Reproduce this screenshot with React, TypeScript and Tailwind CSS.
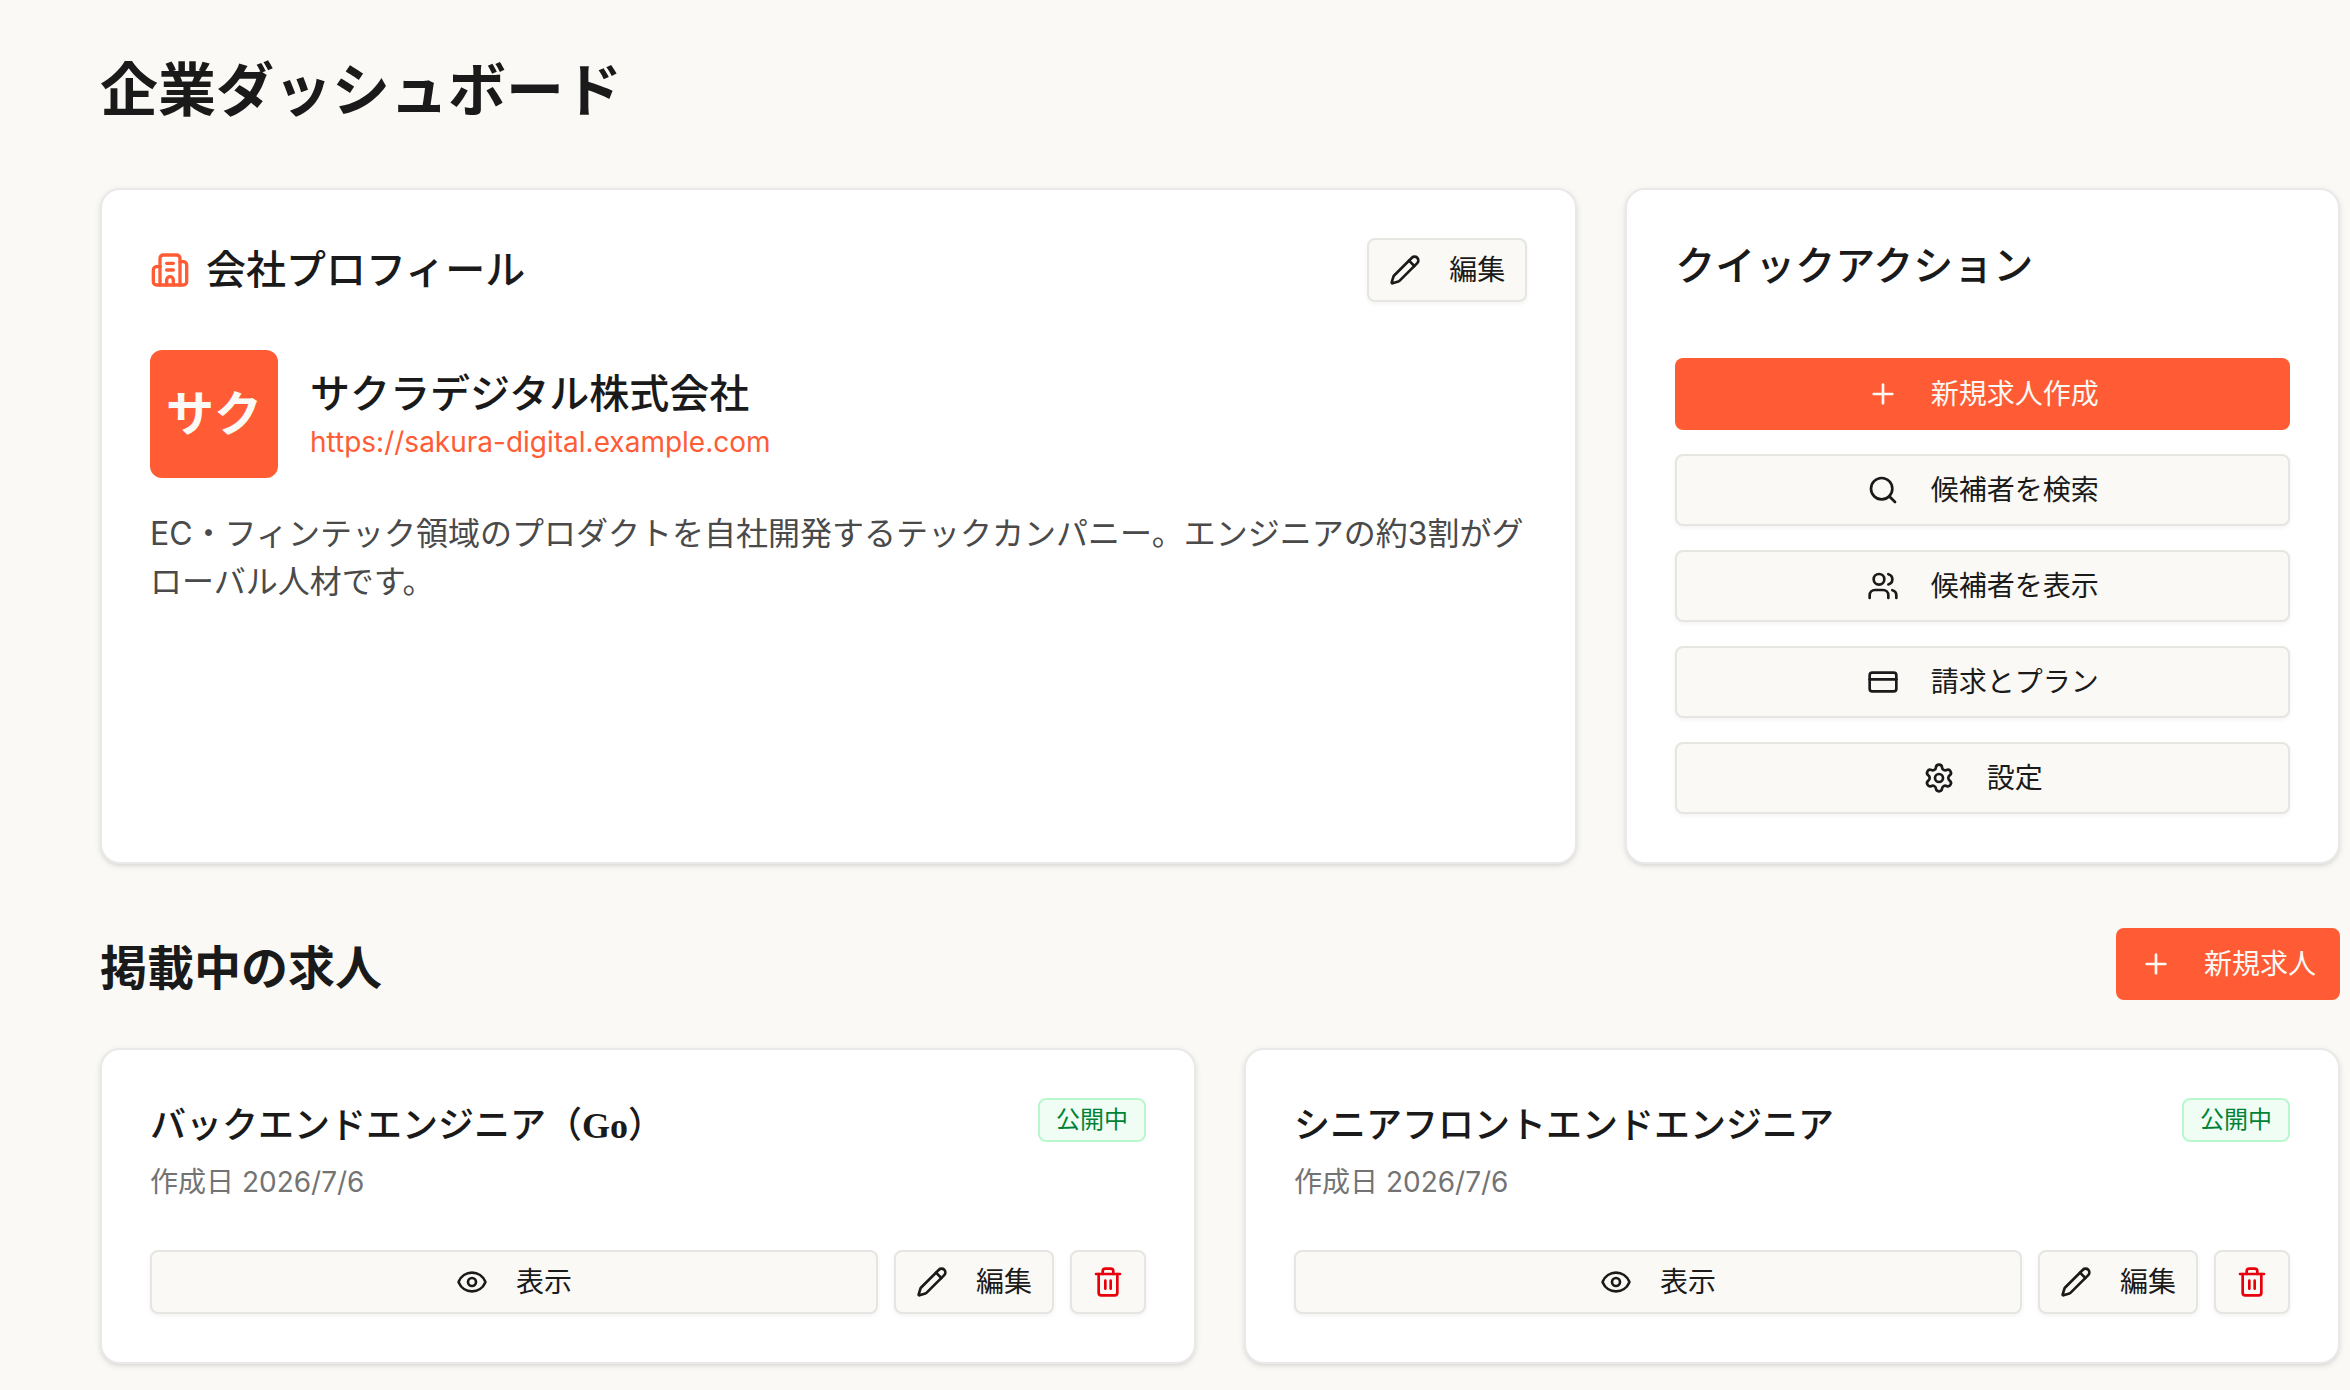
import type { ButtonHTMLAttributes, ReactNode } from 'react';
import {
  Building2,
  CreditCard,
  Eye,
  Pencil,
  Plus,
  Search,
  Settings,
  Trash2,
  Users,
  type LucideIcon,
} from 'lucide-react';
import clsx from 'clsx';

type Job = {
  id: string;
  title: ReactNode;
  createdAt: string;
};

type QuickAction = {
  label: string;
  icon: LucideIcon;
  primary?: boolean;
};

const company = {
  name: 'サクラデジタル株式会社',
  initials: 'サク',
  website: 'https://sakura-digital.example.com',
  description:
    'EC・フィンテック領域のプロダクトを自社開発するテックカンパニー。エンジニアの約3割がグローバル人材です。',
};

const quickActions: QuickAction[] = [
  { label: '新規求人作成', icon: Plus, primary: true },
  { label: '候補者を検索', icon: Search },
  { label: '候補者を表示', icon: Users },
  { label: '請求とプラン', icon: CreditCard },
  { label: '設定', icon: Settings },
];

const jobs: Job[] = [
  {
    id: 'backend',
    title: (
      <>
        バックエンドエンジニア（<span className="font-bold">Go</span>）
      </>
    ),
    createdAt: '2026/7/6',
  },
  { id: 'frontend', title: 'シニアフロントエンドエンジニア', createdAt: '2026/7/6' },
];

type ButtonProps = ButtonHTMLAttributes<HTMLButtonElement> & {
  variant?: 'primary' | 'outline';
  size?: 'sm' | 'md';
};

function Button({ variant = 'outline', size = 'md', className, children, ...props }: ButtonProps) {
  return (
    <button
      type="button"
      className={clsx(
        'inline-flex items-center justify-center rounded-lg text-[28px] leading-10 whitespace-nowrap',
        variant === 'primary' && 'bg-[#ff5c35] text-[#faf9f5] hover:bg-[#f04d26]',
        variant === 'outline' &&
          'border-2 border-[#e6e5e1] bg-[#faf9f5] text-[#1a1a1a] shadow-[0_2px_4px_rgba(0,0,0,0.05)] hover:bg-[#f3f2ed]',
        size === 'md' && 'h-18 gap-8 px-6',
        size === 'sm' && 'h-16 gap-7 px-5',
        className,
      )}
      {...props}
    >
      {children}
    </button>
  );
}

function Card({ className, children }: { className?: string; children: ReactNode }) {
  return (
    <div
      className={clsx(
        'rounded-[20px] border-2 border-[#e9e9e9] bg-white p-12 shadow-[0_2px_6px_rgba(0,0,0,0.1),0_2px_4px_-2px_rgba(0,0,0,0.1)]',
        className,
      )}
    >
      {children}
    </div>
  );
}

function CompanyProfile() {
  return (
    <Card className="col-span-2">
      <div className="flex items-center justify-between">
        <h2 className="flex items-center gap-4 text-[40px] leading-14 font-medium">
          <Building2 className="size-10 text-[#ff5c35]" />
          会社プロフィール
        </h2>
        <Button size="sm">
          <Pencil className="size-8" />
          編集
        </Button>
      </div>

      <div className="mt-12 flex items-center gap-8">
        <div className="flex size-32 items-center justify-center rounded-xl bg-[#ff5c35] text-5xl font-bold text-[#faf9f5]">
          {company.initials}
        </div>
        <div>
          <h3 className="text-[40px] leading-14 font-medium">{company.name}</h3>
          <a href={company.website} className="block text-[28px] leading-10 text-[#ff5c35] hover:underline">
            {company.website}
          </a>
        </div>
      </div>

      <p className="mt-8 text-[32px] leading-12 text-[#4a4a4a]">{company.description}</p>
    </Card>
  );
}

function QuickActions() {
  return (
    <Card>
      <h2 className="text-[40px] leading-14 font-medium">クイックアクション</h2>
      <div className="mt-16 flex flex-col gap-6">
        {quickActions.map(({ label, icon: Icon, primary }) => (
          <Button key={label} variant={primary ? 'primary' : 'outline'}>
            <Icon className="size-8" />
            {label}
          </Button>
        ))}
      </div>
    </Card>
  );
}

function JobCard({ job }: { job: Job }) {
  return (
    <Card>
      <div className="flex items-start justify-between">
        <div>
          <h3 className="font-['Liberation_Serif','Noto_Sans_CJK_JP',sans-serif] text-4xl leading-14 font-medium">
            {job.title}
          </h3>
          <p className="mt-2 text-[28px] leading-10 text-[#737373]">作成日 {job.createdAt}</p>
        </div>
        <span className="rounded-lg border-2 border-green-200 bg-green-50 px-4 py-1 text-2xl text-green-700">
          公開中
        </span>
      </div>

      <div className="mt-12 flex gap-4">
        <Button size="sm" className="flex-1">
          <Eye className="size-8" />
          表示
        </Button>
        <Button size="sm">
          <Pencil className="size-8" />
          編集
        </Button>
        <Button size="sm" aria-label="削除">
          <Trash2 className="size-8 text-red-600" />
        </Button>
      </div>
    </Card>
  );
}

export default function App() {
  return (
    <main
      lang="ja"
      className="min-h-screen bg-[#faf9f5] pt-13 pr-[10px] pb-6 pl-25 font-['Inter','Noto_Sans_CJK_JP',sans-serif] text-[#1a1a1a]"
    >
      <h1 className="text-[58px] leading-19 font-bold">企業ダッシュボード</h1>

      <div className="mt-15 grid grid-cols-3 gap-12">
        <CompanyProfile />
        <QuickActions />
      </div>

      <section className="mt-16">
        <div className="flex items-end justify-between">
          <h2 className="text-[47px] leading-16 font-bold">掲載中の求人</h2>
          <Button variant="primary">
            <Plus className="size-8" />
            新規求人
          </Button>
        </div>

        <div className="mt-12 grid grid-cols-2 gap-12">
          {jobs.map((job) => (
            <JobCard key={job.id} job={job} />
          ))}
        </div>
      </section>
    </main>
  );
}
